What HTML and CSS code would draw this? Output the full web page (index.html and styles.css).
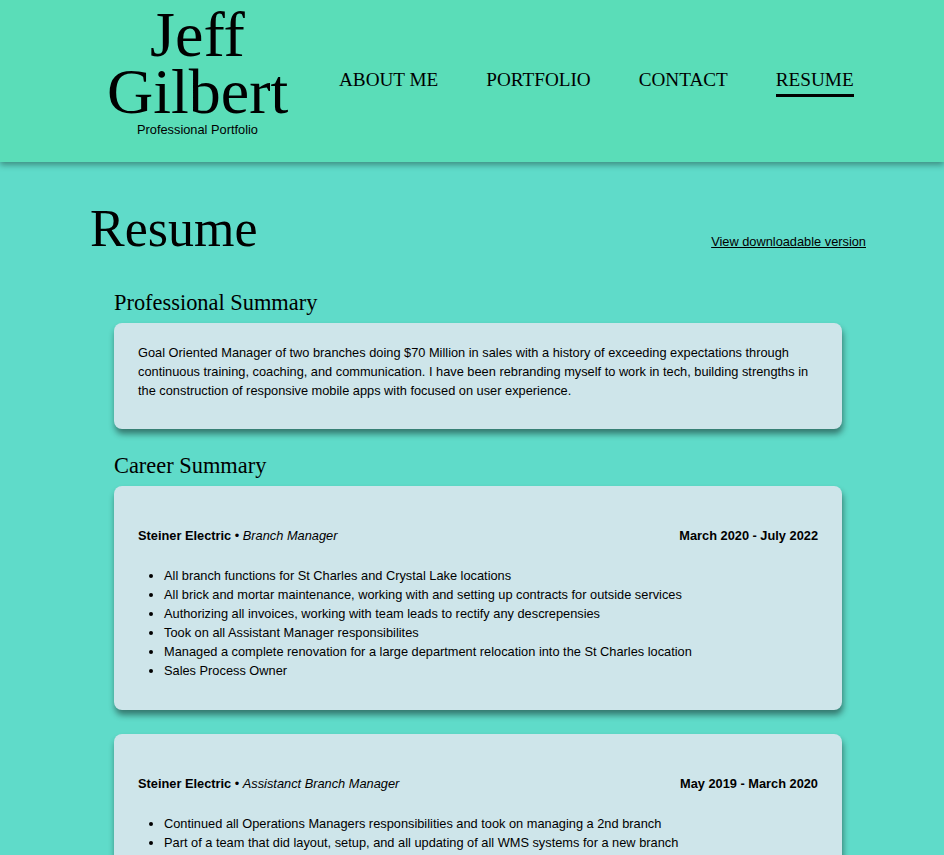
FILE: index.html
```html
<!DOCTYPE html>
<html lang="en">
<head>
<meta charset="utf-8">
<title>Jeff Gilbert - Resume</title>
<link rel="stylesheet" href="styles.css">
</head>
<body>
<header class="site-header">
  <div class="brand">
    <h1 class="brand-name">Jeff<br>Gilbert</h1>
    <p class="brand-tag">Professional Portfolio</p>
  </div>
  <nav class="nav">
    <a class="nav-link" href="#">ABOUT ME</a>
    <a class="nav-link" href="#">PORTFOLIO</a>
    <a class="nav-link" href="#">CONTACT</a>
    <a class="nav-link active" href="#">RESUME</a>
  </nav>
</header>
<main class="main">
  <div class="title-row">
    <h2 class="page-title">Resume</h2>
    <a class="download" href="#">View downloadable version</a>
  </div>
  <section class="section">
    <h3 class="section-title">Professional Summary</h3>
    <div class="card summary">
      <p>Goal Oriented Manager of two branches doing $70 Million in sales with a history of exceeding expectations through continuous training, coaching, and communication. I have been rebranding myself to work in tech, building strengths in the construction of responsive mobile apps with focused on user experience.</p>
    </div>
  </section>
  <section class="section">
    <h3 class="section-title">Career Summary</h3>
    <div class="card job">
      <div class="job-head">
        <span><b>Steiner Electric</b> • <i>Branch Manager</i></span>
        <b>March 2020 - July 2022</b>
      </div>
      <ul class="job-list">
        <li>All branch functions for St Charles and Crystal Lake locations</li>
        <li>All brick and mortar maintenance, working with and setting up contracts for outside services</li>
        <li>Authorizing all invoices, working with team leads to rectify any descrepensies</li>
        <li>Took on all Assistant Manager responsibilites</li>
        <li>Managed a complete renovation for a large department relocation into the St Charles location</li>
        <li>Sales Process Owner</li>
      </ul>
    </div>
    <div class="card job">
      <div class="job-head">
        <span><b>Steiner Electric</b> • <i>Assistanct Branch Manager</i></span>
        <b>May 2019 - March 2020</b>
      </div>
      <ul class="job-list">
        <li>Continued all Operations Managers responsibilities and took on managing a 2nd branch</li>
        <li>Part of a team that did layout, setup, and all updating of all WMS systems for a new branch</li>
        <li>Trained and developed new team members across warehouse and counter operations</li>
        <li>Managed daily scheduling and inventory accuracy</li>
      </ul>
    </div>
  </section>
</main>
</body>
</html>
```
FILE: styles.css
```css
* { box-sizing: border-box; }
html, body { margin: 0; padding: 0; }
body {
  background: #5fdbc9;
  font-family: "Liberation Sans", Arial, sans-serif;
  font-size: 12.8px;
  color: #000;
}
.site-header {
  background: #5addb8;
  height: 162px;
  display: flex;
  align-items: flex-start;
  padding-left: 107px;
  box-shadow: 0 3px 6px rgba(0, 0, 0, 0.35);
  position: relative;
  z-index: 1;
}
.brand {
  width: 181px;
  text-align: center;
  padding-top: 6px;
}
.brand-name {
  margin: 0;
  font-family: "Liberation Serif", "Times New Roman", serif;
  font-weight: normal;
  font-size: 64px;
  line-height: 57px;
}
.brand-tag {
  margin: 2px 0 0;
  font-size: 12.8px;
  line-height: 15px;
}
.nav {
  display: flex;
  gap: 48px;
  margin-left: 51px;
  padding-top: 68px;
}
.nav-link {
  font-family: "Liberation Serif", "Times New Roman", serif;
  font-size: 19.2px;
  line-height: 24px;
  color: #000;
  text-decoration: none;
  padding-bottom: 2px;
  border-bottom: 3px solid transparent;
}
.nav-link.active { border-bottom-color: #000; }
.main {
  padding: 37px 78px 40px 90px;
}
.title-row {
  display: flex;
  justify-content: space-between;
  align-items: baseline;
}
.page-title {
  margin: 0;
  font-family: "Liberation Serif", "Times New Roman", serif;
  font-weight: normal;
  font-size: 52px;
  line-height: 60px;
}
.download {
  color: #000;
  font-size: 12.8px;
  text-decoration: underline;
}
.section {
  padding: 0 24px;
}
.section:first-of-type { margin-top: 31px; }
.section-title {
  margin: 0 0 8px;
  font-family: "Liberation Serif", "Times New Roman", serif;
  font-weight: normal;
  font-size: 22.4px;
  line-height: 25px;
}
.card {
  background: #cee5ea;
  border-radius: 8px;
  box-shadow: 1px 5px 6px rgba(0, 0, 0, 0.45);
  padding: 20px 24px 29px;
  line-height: 19px;
}
.card p { margin: 0; }
.summary { margin-bottom: 24px; }
.job { padding: 40px 24px 30px; margin-bottom: 24px; }
.job-head {
  display: flex;
  justify-content: space-between;
}
.job-list {
  margin: 21px 0 0;
  padding-left: 26px;
}
```
